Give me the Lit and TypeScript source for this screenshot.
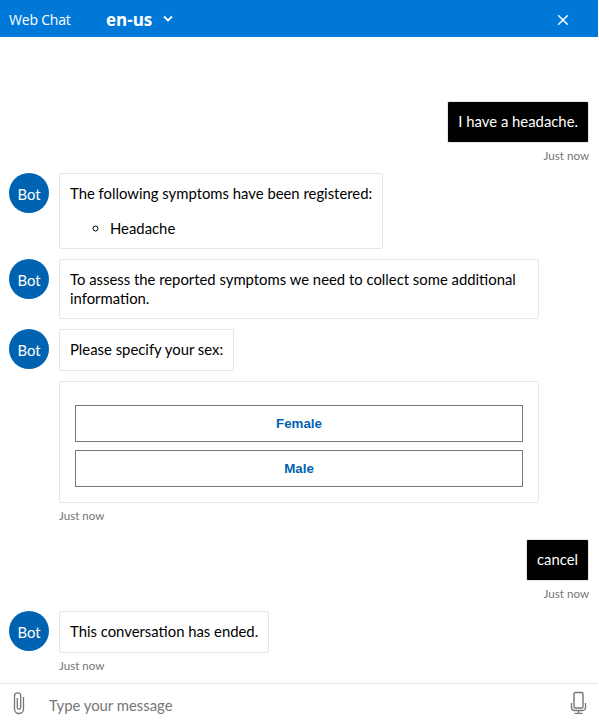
import { LitElement, html, css, svg } from "lit";
import { customElement, property } from "lit/decorators.js";

const BODY_FONT = css`Lato, "Open Sans", sans-serif`;

@customElement("chat-header")
class ChatHeader extends LitElement {
  static styles = css`
    :host {
      display: flex;
      align-items: center;
      height: 37px;
      box-sizing: border-box;
      padding: 1px 29px 0 9px;
      background: #0078d7;
      color: #fff;
      font-family: "Open Sans", "Noto Sans", sans-serif;
      font-size: 14px;
    }
    .title { width: 97px; letter-spacing: -0.2px; }
    .lang { font-weight: 700; font-size: 17px; width: 57px; }
    .close { margin: 2px 0 0 auto; stroke-width: 1.5; }
    svg { display: block; fill: none; stroke: #fff; stroke-width: 1.8; }
  `;
  render() {
    return html`
      <span class="title">Web Chat</span>
      <span class="lang">en-us</span>
      <svg width="10" height="8" viewBox="0 0 10 8"><path d="M1 1.5 5 5.5 9 1.5" /></svg>
      <svg class="close" width="12" height="12" viewBox="0 0 12 12"><path d="M1.2 1.2 10.8 10.8M10.8 1.2 1.2 10.8" /></svg>
    `;
  }
}

@customElement("chat-message")
class ChatMessage extends LitElement {
  @property({ type: Boolean, reflect: true }) user = false;
  @property({ type: Boolean }) avatar = false;
  @property({ type: Boolean, reflect: true }) wide = false;
  @property() time = "";
  static styles = css`
    :host { display: flex; gap: 10px; padding: 0 9px; font-family: ${BODY_FONT}; }
    :host([user]) { justify-content: flex-end; }
    .avatar {
      width: 40px;
      height: 40px;
      flex: none;
      border-radius: 50%;
      text-align: center;
      font-size: 14.85px;
      line-height: 42px;
      color: #fff;
    }
    .bot { background: #0063b1; }
    .column { display: flex; flex-direction: column; align-items: flex-start; width: 480px; }
    :host([user]) .column { align-items: flex-end; }
    .bubble {
      box-sizing: border-box;
      border: 1px solid #e6e6e6;
      border-radius: 2px;
      padding: 10px;
      font-size: 14.85px;
      line-height: 19px;
      min-height: 42px;
      color: #000;
      max-width: 480px;
    }
    :host([wide]) .bubble { width: 480px; padding: 23px 15px 15px; }
    :host([user]) .bubble { background: #000; color: #fff; }
    .time { font-size: 11.6px; line-height: 15px; color: #767676; margin-top: 5px; }
  `;
  render() {
    return html`
      <div class="avatar ${this.avatar ? "bot" : ""}">${this.avatar ? "Bot" : ""}</div>
      <div class="column">
        <div class="bubble"><slot></slot></div>
        ${this.time ? html`<div class="time">${this.time}</div>` : ""}
      </div>
    `;
  }
}

@customElement("chat-input")
class ChatInput extends LitElement {
  static styles = css`
    :host {
      display: flex;
      align-items: center;
      box-sizing: border-box;
      height: 38px;
      border-top: 1px solid #e6e6e6;
      padding: 0 11px 0 13px;
      font: 14.85px ${BODY_FONT};
      color: #767676;
    }
    .hint { flex: 1; margin-left: 24px; padding-top: 5px; }
    svg { display: block; fill: none; stroke: #767676; }
    .clip { width: 12px; height: 24px; stroke-width: 1.3; }
    .mic { width: 17px; height: 24px; }
  `;
  render() {
    return html`
      <svg class="clip" viewBox="0 0 12 24">
        <path d="M4.3 7V16.5a1.7 1.7 0 0 0 3.4 0V5A3.1 3.1 0 0 0 1.5 5V18a4.5 4.5 0 0 0 9 0V6" />
      </svg>
      <span class="hint">Type your message</span>
      <svg class="mic" viewBox="0 0 17 24">${svg`
        <rect x="4" y="1.5" width="9" height="15.5" rx="1.5" stroke-width="1.4" />
        <path d="M1.5 12v4.5a3 3 0 0 0 3 3h8a3 3 0 0 0 3-3V12M8.5 19.5v3M4.5 22.3h8" stroke-width="1.3" />`}
      </svg>
    `;
  }
}

@customElement("app-root")
class AppRoot extends LitElement {
  static styles = css`
    :host { display: flex; flex-direction: column; height: 721px; width: 598px; background: #fff; overflow: hidden; }
    .log { flex: 1; display: flex; flex-direction: column; padding-top: 64px; gap: 10px; }
    .gap { margin-top: 6px; }
    ul { margin: 16px 0 0; padding-left: 40px; list-style: circle; }
    .choices { display: flex; flex-direction: column; gap: 8px; }
    button {
      height: 37px;
      border: 1px solid #767676;
      background: #fff;
      color: #0063b1;
      font: 700 13.333px "Liberation Sans", Arial, sans-serif;
    }
  `;
  render() {
    return html`
      <chat-header></chat-header>
      <div class="log">
        <chat-message user time="Just now">I have a headache.</chat-message>
        <chat-message avatar>The following symptoms have been registered:<ul><li>Headache</li></ul></chat-message>
        <chat-message avatar>To assess the reported symptoms we need to collect some additional information.</chat-message>
        <chat-message avatar>Please specify your sex:</chat-message>
        <chat-message wide time="Just now">
          <div class="choices"><button>Female</button><button>Male</button></div>
        </chat-message>
        <chat-message class="gap" user time="Just now">cancel</chat-message>
        <chat-message avatar time="Just now">This conversation has ended.</chat-message>
      </div>
      <chat-input></chat-input>
    `;
  }
}
